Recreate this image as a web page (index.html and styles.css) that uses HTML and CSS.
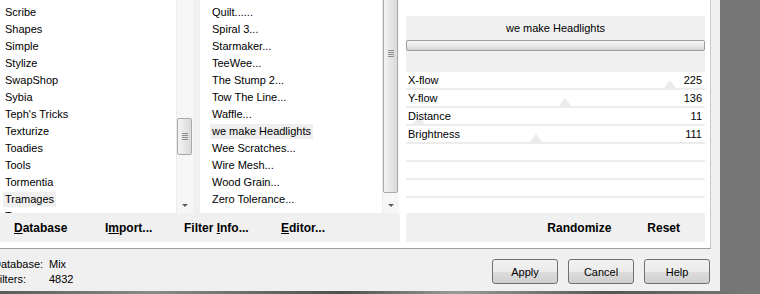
FILE: index.html
```html
<!DOCTYPE html>
<html lang="en">
<head>
    <meta charset="UTF-8">
    <title>Filters Unlimited</title>
    <link rel="stylesheet" href="styles.css">
</head>
<body>
    <div class="screen">
        <div class="main">
            <div class="dialog">
                <div class="upper">
                    <div class="left">
                        <div class="lists">
                            <div class="listbox cats">
                                <ul class="items">
                                    <li><span>Scribe</span></li>
                                    <li><span>Shapes</span></li>
                                    <li><span>Simple</span></li>
                                    <li><span>Stylize</span></li>
                                    <li><span>SwapShop</span></li>
                                    <li><span>Sybia</span></li>
                                    <li><span>Teph's Tricks</span></li>
                                    <li><span>Texturize</span></li>
                                    <li><span>Toadies</span></li>
                                    <li><span>Tools</span></li>
                                    <li><span>Tormentia</span></li>
                                    <li><span class="sel">Tramages</span></li>
                                    <li><span>T</span></li>
                                </ul>
                                <div class="vscroll">
                                    <div class="thumb thumb_cats"><i></i><i></i><i></i><i></i></div>
                                    <div class="arrow"></div>
                                </div>
                            </div>
                            <div class="listbox filters">
                                <ul class="items">
                                    <li><span>Quilt......</span></li>
                                    <li><span>Spiral 3...</span></li>
                                    <li><span>Starmaker...</span></li>
                                    <li><span>TeeWee...</span></li>
                                    <li><span>The Stump 2...</span></li>
                                    <li><span>Tow The Line...</span></li>
                                    <li><span>Waffle...</span></li>
                                    <li><span class="sel">we make Headlights</span></li>
                                    <li><span>Wee Scratches...</span></li>
                                    <li><span>Wire Mesh...</span></li>
                                    <li><span>Wood Grain...</span></li>
                                    <li><span>Zero Tolerance...</span></li>
                                </ul>
                                <div class="vscroll">
                                    <div class="thumb thumb_filters"><i></i><i></i><i></i><i></i></div>
                                    <div class="arrow"></div>
                                </div>
                            </div>
                        </div>
                        <div class="tools">
                            <span><u>D</u>atabase</span>
                            <span>I<u>m</u>port...</span>
                            <span>Filter <u>I</u>nfo...</span>
                            <span><u>E</u>ditor...</span>
                        </div>
                    </div>

                    <div class="panel">
                        <div class="preview_top"></div>
                        <div class="head">
                            <div class="head_title">we make Headlights</div>
                            <div class="head_bar"></div>
                        </div>
                        <div class="params">
                            <div class="param"><span>X-flow</span><span>225</span><b class="mark" style="left:88.2%"></b></div>
                            <div class="param"><span>Y-flow</span><span>136</span><b class="mark" style="left:53.3%"></b></div>
                            <div class="param"><span>Distance</span><span>11</span><b class="mark" style="left:4.3%"></b></div>
                            <div class="param"><span>Brightness</span><span>111</span><b class="mark" style="left:43.5%"></b></div>
                            <div class="param"></div>
                            <div class="param"></div>
                            <div class="param"></div>
                            <div class="param"></div>
                        </div>
                        <div class="panel_tools">
                            <span>Randomize</span>
                            <span>Reset</span>
                        </div>
                    </div>
                </div>

                <div class="lower">
                    <div class="status">
                        <span>Database:</span><span>Mix</span>
                        <span>Filters:</span><span>4832</span>
                    </div>
                    <div class="buttons">
                        <button class="btn">Apply</button>
                        <button class="btn">Cancel</button>
                        <button class="btn">Help</button>
                    </div>
                </div>
            </div>
            <div class="desk"></div>
        </div>
        <div class="strip"></div>
    </div>
</body>
</html>
```

FILE: styles.css
```css
* {
    box-sizing: border-box;
}
body {
    margin: 0;
    font-family: "Liberation Sans", Arial, sans-serif;
    font-size: 11px;
    color: #000;
    background: #767676;
}
.screen {
    width: 760px;
    height: 294px;
    overflow: hidden;
}
.main {
    display: flex;
    height: 291px;
}
.dialog {
    width: 720px;
    flex: none;
    background: #f0f0f0;
    overflow: hidden;
}
.desk {
    flex: 1;
    background: #767676;
}
.strip {
    height: 3px;
    background: linear-gradient(90deg, #5a5a5a, #8a8a8a 20%, #4e4e4e 45%, #9a9a9a 60%, #555 80%, #7a7a7a);
}

/* upper part */
.upper {
    display: flex;
    width: 711px;
    height: 249px;
    background: #fff;
    border-right: 1px solid #c9c9c9;
    border-bottom: 1px solid #a0a0a0;
}
.left {
    width: 400px;
    flex: none;
}
.lists {
    display: flex;
    height: 213px;
    background: #f0f0f0;
}
.listbox {
    display: flex;
    height: 213px;
    background: #fff;
    overflow: hidden;
}
.cats {
    width: 193px;
}
.filters {
    width: 200px;
    margin-left: 7px;
}
.items {
    flex: 1;
    list-style: none;
    margin: 0;
    padding: 4px 0 0 3px;
}
.filters .items {
    padding-left: 10px;
}
.items li {
    height: 17px;
    line-height: 17px;
    white-space: nowrap;
}
.items span {
    display: inline-block;
    line-height: 15px;
    padding: 0 2px;
    vertical-align: top;
    margin-top: 1px;
}
.items .sel {
    background: #efefef;
}

/* scrollbars */
.vscroll {
    width: 17px;
    display: flex;
    flex-direction: column;
    background: #f6f6f6;
    border-left: 1px solid #ececec;
}
.filters .vscroll {
    margin-right: 1px;
}
.thumb {
    width: 15px;
    border: 1px solid #a9a9a9;
    border-radius: 2px;
    background: linear-gradient(90deg, #f4f4f4, #e6e6e6 50%, #d9d9d9);
    display: flex;
    flex-direction: column;
    align-items: center;
    gap: 1px;
}
.thumb i {
    display: block;
    width: 6px;
    height: 1px;
    background: #8c8c8c;
}
.thumb_cats {
    margin-top: 118px;
    height: 37px;
    justify-content: center;
}
.thumb_filters {
    margin-top: -3px;
    height: 196px;
    padding-top: 52px;
}
.arrow {
    margin-top: auto;
    height: 17px;
    display: flex;
    align-items: center;
    justify-content: center;
}
.arrow::after {
    content: "";
    border-left: 3px solid transparent;
    border-right: 3px solid transparent;
    border-top: 3px solid #5c5c5c;
    margin-top: 2px;
}

/* category buttons */
.tools {
    height: 29px;
    display: grid;
    grid-template-columns: 91px 79px 97px auto;
    align-items: center;
    padding: 1px 0 0 14px;
    background: #f0f0f0;
    font-size: 12px;
    font-weight: bold;
}

/* right panel */
.panel {
    width: 299px;
    margin-left: 6px;
    flex: none;
}
.preview_top {
    height: 16px;
}
.head {
    height: 56px;
    background: #f0f0f0;
    padding-top: 5px;
}
.head_title {
    text-align: center;
    line-height: 14px;
}
.head_bar {
    height: 11px;
    margin-top: 5px;
    border: 1px solid #9c9c9c;
    border-radius: 2px;
    background: linear-gradient(#f8f8f8, #e8e8e8 50%, #d5d5d5);
}
.params {
    height: 141px;
    overflow: hidden;
}
.param {
    position: relative;
    height: 18px;
    display: flex;
    justify-content: space-between;
    align-items: center;
    padding: 0 3px 0 2px;
    border-bottom: 2px solid #ececec;
}
.param span {
    position: relative;
    z-index: 1;
}
.mark {
    position: absolute;
    bottom: 0;
    margin-left: -6px;
    border-left: 6px solid transparent;
    border-right: 6px solid transparent;
    border-bottom: 8px solid #ebebeb;
}
.panel_tools {
    height: 29px;
    display: flex;
    justify-content: flex-end;
    align-items: center;
    gap: 36px;
    padding: 1px 25px 0 0;
    background: #f0f0f0;
    font-size: 12px;
    font-weight: bold;
}

/* status and buttons */
.lower {
    display: flex;
    height: 42px;
}
.status {
    display: grid;
    grid-template-columns: 56px auto;
    align-content: start;
    margin-left: -7px;
    padding-top: 8px;
    line-height: 15px;
}
.buttons {
    display: flex;
    gap: 10px;
    margin-left: auto;
    margin-right: 10px;
    padding-top: 10px;
}
.btn {
    width: 66px;
    height: 25px;
    font-family: "Liberation Sans", Arial, sans-serif;
    font-size: 11px;
    color: #000;
    border: 1px solid #707070;
    border-radius: 3px;
    background: linear-gradient(#f2f2f2, #ebebeb 50%, #dddddd 51%, #cfcfcf);
    padding: 0;
}
```
